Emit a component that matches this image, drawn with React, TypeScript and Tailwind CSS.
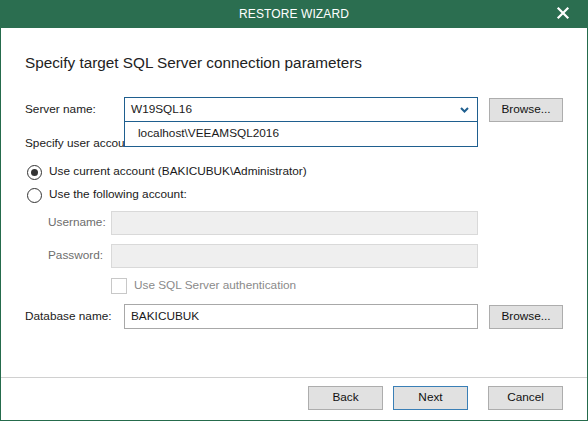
import React from "react";

const font = { fontFamily: '"Liberation Sans", Arial, sans-serif' };

function Button({ label, primary, w = "w-[75px]" }: { label: string; primary?: boolean; w?: string }) {
  return (
    <div
      className={`${w} h-[24px] flex items-center justify-center text-[11.8px] text-[#111] bg-[#e1e1e1] border ${
        primary ? "border-[#3a7fb6]" : "border-[#adadad]"
      }`}
    >
      {label}
    </div>
  );
}

export default function App() {
  return (
    <div className="w-[588px] h-[421px] flex flex-col bg-white border-x border-b border-[#256b4c] text-[#1a1a1a]" style={font}>
      <div className="h-[28px] -mx-px bg-[#2b6e50] flex items-center relative shrink-0">
        <div className="flex-1 text-center text-white text-[12px] tracking-[0.1px]">RESTORE WIZARD</div>
        <div className="absolute right-[18px] top-[6px] w-[14px] h-[14px]">
          <svg viewBox="0 0 14 14" width="14" height="14">
            <path d="M2.5 2.5 L11.5 11.5 M11.5 2.5 L2.5 11.5" stroke="#ffffff" strokeWidth="2.2" strokeLinecap="square" />
          </svg>
        </div>
      </div>

      <div className="h-[349px] shrink-0 flex flex-col pl-[24px] relative text-[11.8px]">
        <div className="mt-[24px] h-[22px] flex items-center text-[15.3px] text-[#222]">
          Specify target SQL Server connection parameters
        </div>

        <div className="mt-[23px] h-[25px] flex items-center">
          <div className="w-[99px]">Server name:</div>
          <div className="relative w-[354px] h-[25px] border border-[#1f5f8f] flex items-center pl-[6px]">
            <span>W19SQL16</span>
            <svg className="absolute right-[8px] top-[9px]" width="9" height="6" viewBox="0 0 9 6">
              <path d="M1 1 L4.5 4.5 L8 1" stroke="#1f5f8f" strokeWidth="2" fill="none" />
            </svg>
            <div className="absolute left-[-1px] top-[23px] w-[354px] h-[26px] bg-white border border-[#1f5f8f] flex items-center pl-[13px] z-10">
              localhost\VEEAMSQL2016
            </div>
          </div>
          <div className="ml-[11px]">
            <Button label="Browse..." w="w-[74px]" />
          </div>
        </div>

        <div className="mt-[14px] h-[16px] flex items-center">Specify user account to connect:</div>

        <div className="mt-[12px] h-[16px] flex items-center">
          <div className="ml-[2px] w-[15px] h-[15px] rounded-full border border-[#333] flex items-center justify-center">
            <div className="w-[7px] h-[7px] rounded-full bg-[#333]" />
          </div>
          <span className="ml-[7px]">Use current account (BAKICUBUK\Administrator)</span>
        </div>

        <div className="mt-[7px] h-[16px] flex items-center">
          <div className="ml-[2px] w-[15px] h-[15px] rounded-full border border-[#333]" />
          <span className="ml-[7px]">Use the following account:</span>
        </div>

        <div className="mt-[8px] h-[24px] flex items-center text-[#6d6d6d]">
          <div className="ml-[23px] w-[63px]">Username:</div>
          <div className="w-[367px] h-[24px] bg-[#efefef] border border-[#d9d9d9]" />
        </div>

        <div className="mt-[9px] h-[24px] flex items-center text-[#6d6d6d]">
          <div className="ml-[23px] w-[63px]">Password:</div>
          <div className="w-[367px] h-[24px] bg-[#efefef] border border-[#d9d9d9]" />
        </div>

        <div className="mt-[10px] h-[16px] flex items-center text-[#8a8a8a]">
          <div className="ml-[86px] w-[16px] h-[16px] border border-[#c8c8c8] bg-white" />
          <span className="ml-[7px]">Use SQL Server authentication</span>
        </div>

        <div className="mt-[10px] h-[25px] flex items-center">
          <div className="w-[99px]">Database name:</div>
          <div className="w-[354px] h-[25px] border border-[#a8a8a8] flex items-center pl-[6px]">BAKICUBUK</div>
          <div className="ml-[11px]">
            <Button label="Browse..." w="w-[74px]" />
          </div>
        </div>
      </div>

      <div className="flex-1 border-t border-[#d0d0d0] flex items-start justify-end pr-[24px] pt-[8px] gap-[10px]">
        <Button label="Back" />
        <Button label="Next" primary />
        <div className="ml-[10px]">
          <Button label="Cancel" />
        </div>
      </div>
    </div>
  );
}
